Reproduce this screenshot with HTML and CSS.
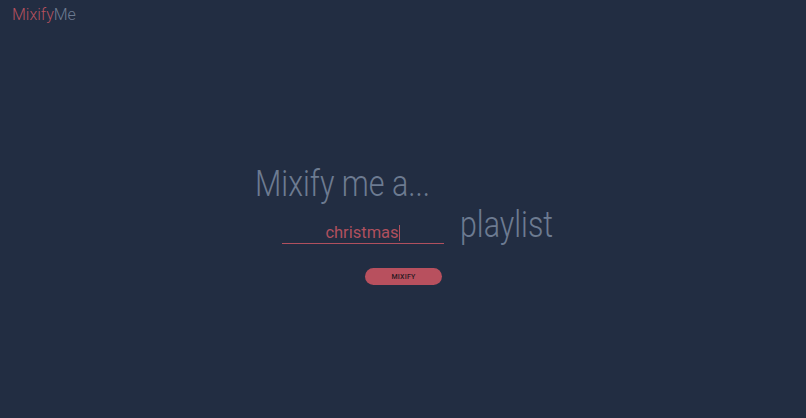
FILE: index.html
```html
<!DOCTYPE html>
<html>
<head>
<meta charset="utf-8">
<link rel="stylesheet" href="styles.css">
</head>
<body>
<header class="topbar">
  <span class="logo"><span class="logo-a">Mixify</span><span class="logo-b">Me</span></span>
</header>
<main class="stage">
  <div class="panel">
    <h1 class="lead"><span class="narrow">Mixify me a...</span></h1>
    <div class="row">
      <div class="field"><span class="field-text">christmas</span><span class="caret"></span></div>
      <span class="suffix narrow">playlist</span>
    </div>
  </div>
  <button class="go">MIXIFY</button>
</main>
</body>
</html>
```

FILE: styles.css
```css
html, body {
  margin: 0;
  padding: 0;
  height: 100%;
}
body {
  background: #222d42;
  font-family: Roboto, "Noto Sans", sans-serif;
  overflow: hidden;
}
.topbar {
  padding: 5px 12px 0;
  height: 30px;
}
.logo {
  font-size: 16px;
  font-weight: 300;
  line-height: 20px;
  display: inline-block;
}
.logo-a { color: #b5515f; }
.logo-b { color: #6d7b91; }
.stage {
  display: flex;
  flex-direction: column;
  align-items: center;
  padding-top: 128px;
}
.panel {
  width: 297px;
  display: flex;
  flex-direction: column;
}
.narrow {
  display: inline-block;
  transform: scaleX(0.845);
  transform-origin: left center;
}
.lead {
  margin: 0;
  font-size: 36px;
  font-weight: 300;
  color: #6d7b91;
  line-height: 42px;
  white-space: nowrap;
}
.row {
  display: flex;
  align-items: flex-end;
  gap: 16px;
  margin-left: 27px;
  margin-top: -1px;
  white-space: nowrap;
}
.field {
  flex: none;
  width: 162px;
  border-bottom: 1px solid #b0505e;
  text-align: center;
  font-size: 16.5px;
  line-height: 20px;
  color: #b0505e;
  margin-bottom: 2px;
}
.caret {
  display: inline-block;
  width: 1px;
  height: 16px;
  background: #b0505e;
  vertical-align: -3px;
}
.suffix {
  font-size: 36px;
  font-weight: 300;
  color: #6d7b91;
  line-height: 42px;
}
.go {
  margin-top: 22px;
  margin-left: 1px;
  width: 77px;
  height: 17px;
  border: none;
  border-radius: 9px;
  background: #b8505e;
  color: #2a1a22;
  font-family: Roboto, sans-serif;
  font-size: 7px;
  font-weight: 500;
  padding: 0;
  letter-spacing: 0.2px;
}
```
